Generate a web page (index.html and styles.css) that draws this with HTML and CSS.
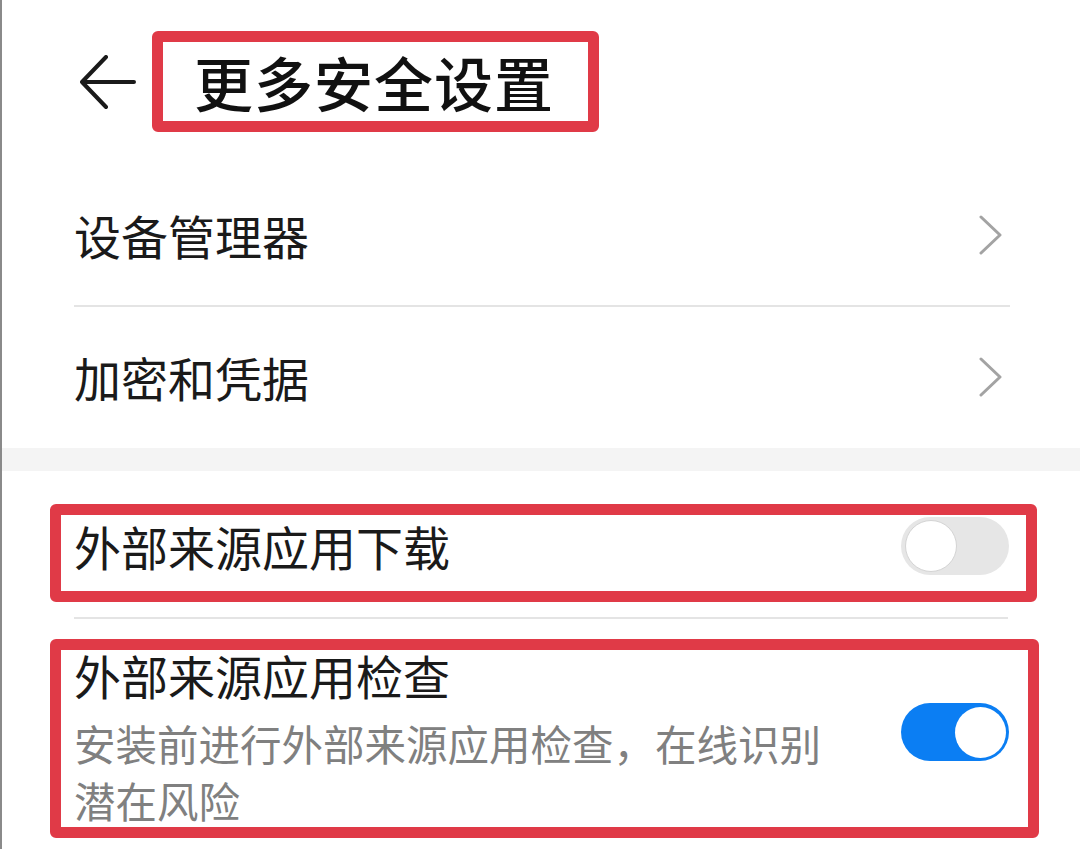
FILE: index.html
```html
<!DOCTYPE html>
<html lang="zh-CN">
<head>
<meta charset="utf-8">
<title>更多安全设置</title>
<link rel="stylesheet" href="styles.css">
</head>
<body>
<div class="page">
  <header class="header">
    <svg class="back" width="56" height="56" viewBox="0 0 56 56" aria-hidden="true">
      <path d="M2 27 H54 M2 27 L26 2 M2 27 L26 52" fill="none" stroke="#1a1a1a" stroke-width="4" stroke-linecap="round" stroke-linejoin="round"/>
    </svg>
    <div class="title-box"><h1 class="title">更多安全设置</h1></div>
  </header>

  <section class="list">
    <div class="row">
      <span class="row-text">设备管理器</span>
      <svg class="chev" width="26" height="40" viewBox="0 0 26 40" aria-hidden="true"><path d="M3 2 L22 20 L3 38" fill="none" stroke="#a3a3a3" stroke-width="3" stroke-linecap="round" stroke-linejoin="round"/></svg>
    </div>
    <div class="divider"></div>
    <div class="row">
      <span class="row-text">加密和凭据</span>
      <svg class="chev" width="26" height="40" viewBox="0 0 26 40" aria-hidden="true"><path d="M3 2 L22 20 L3 38" fill="none" stroke="#a3a3a3" stroke-width="3" stroke-linecap="round" stroke-linejoin="round"/></svg>
    </div>
  </section>

  <div class="band"></div>

  <section class="list2">
    <div class="hl hl-download">
      <span class="row-text">外部来源应用下载</span>
      <span class="toggle off"><span class="knob"></span></span>
    </div>
    <div class="divider divider2"></div>
    <div class="hl hl-check">
      <div class="check-text">
        <div class="row-text">外部来源应用检查</div>
        <div class="sub">安装前进行外部来源应用检查，在线识别潜在风险</div>
      </div>
      <span class="toggle on"><span class="knob"></span></span>
    </div>
  </section>
</div>
</body>
</html>
```

FILE: styles.css
```css
html, body {
  margin: 0;
  padding: 0;
  background: #ffffff;
}
body {
  font-family: "Noto Sans CJK SC", "Noto Sans", sans-serif;
  color: #1a1a1a;
}
.page {
  width: 1078px;
  height: 849px;
  border-left: 2px solid #8a8a8a;
  overflow: hidden;
}
.header {
  height: 165px;
  box-sizing: border-box;
  padding-top: 31px;
  padding-left: 78px;
  display: flex;
  align-items: flex-start;
}
.back {
  margin-top: 24px;
  display: block;
}
.title-box {
  margin-left: 16px;
  border: 11px solid #e03a47;
  border-radius: 6px;
  height: 79px;
  padding: 0 34px 0 31px;
  display: flex;
  align-items: center;
}
.title {
  margin: 0;
  font-size: 59px;
  font-weight: 500;
  line-height: 79px;
  color: #111;
  letter-spacing: 1px;
}
.list {
  padding: 0 70px 0 72px;
}
.row {
  height: 140px;
  display: flex;
  align-items: center;
  justify-content: space-between;
}
.row-text {
  font-size: 47px;
  line-height: 50px;
  color: #1a1a1a;
}
.chev {
  display: block;
  margin-right: 6px;
}
.divider {
  height: 2px;
  background: #e4e4e4;
}
.band {
  margin-top: 1px;
  height: 23px;
  background: #f4f4f4;
}
.list2 {
  padding-top: 33px;
  padding-left: 48px;
}
.hl {
  border: 11px solid #e03a47;
  border-radius: 6px;
  display: flex;
  justify-content: space-between;
}
.hl-download {
  width: 935px;
  height: 62px;
  padding: 0 17px 14px 13px;
  align-items: center;
}
.divider2 {
  margin: 15px 0 0 24px;
  width: 934px;
}
.hl-check {
  margin-top: 20px;
  width: 935px;
  height: 177px;
  padding: 0 19px 0 13px;
  align-items: flex-start;
}
.check-text {
  width: 760px;
}
.sub {
  margin-top: 15px;
  font-size: 41.5px;
  line-height: 57px;
  color: #808080;
}
.toggle {
  width: 108px;
  height: 58px;
  border-radius: 29px;
  box-sizing: border-box;
  padding: 3px;
  display: flex;
  align-items: center;
  flex-shrink: 0;
}
.toggle.off {
  background: #e6e6e6;
  justify-content: flex-start;
}
.toggle.on {
  background: #0b7ef3;
  justify-content: flex-end;
  margin-top: 53px;
}
.knob {
  width: 52px;
  height: 52px;
  border-radius: 50%;
  background: #ffffff;
  box-sizing: border-box;
}
.toggle.off .knob {
  border: 1px solid #d4d4d4;
  margin-left: 1px;
}
.toggle.on .knob {
  width: 51px;
  height: 51px;
}
```
